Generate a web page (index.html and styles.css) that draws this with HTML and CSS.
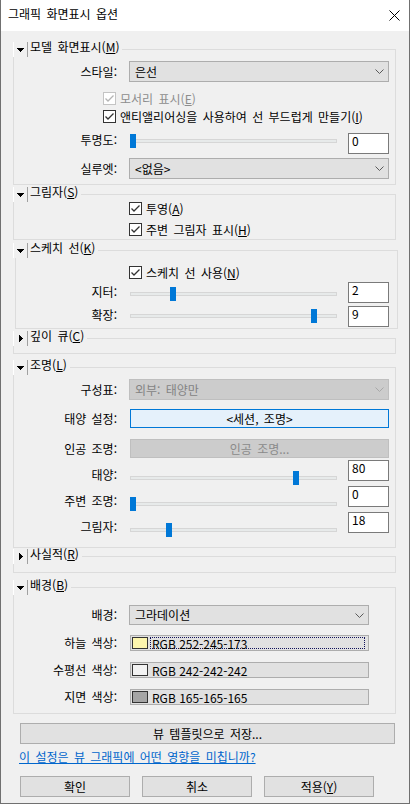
FILE: index.html
```html
<!DOCTYPE html>
<html lang="ko">
<head>
<meta charset="utf-8">
<title>그래픽 화면표시 옵션</title>
<link rel="stylesheet" href="styles.css">
</head>
<body>
<div class="window">
  <div class="titlebar">
    <span class="title">그래픽 화면표시 옵션</span>
    <svg class="close" width="11" height="11" viewBox="0 0 11 11"><path d="M0.5 0.5L10.5 10.5M10.5 0.5L0.5 10.5" stroke="#000" stroke-width="1" fill="none"/></svg>
  </div>
  <div class="content">
    <fieldset class="group g1">
      <legend><span class="toggle"><svg class="tri-down" width="7" height="4" viewBox="0 0 7 4"><path d="M0 0H7V1H6V2H5V3H4V4H3V3H2V2H1V1H0Z" fill="#000"/></svg></span><span class="gtitle">모델 화면표시(<u>M</u>)</span></legend>
      <div class="gbody">
        <div class="row m4">
          <span class="label">스타일:</span>
          <div class="combo"><span>은선</span><svg class="chev" width="9" height="5" viewBox="0 0 9 5"><path d="M0.5 0.5L4.5 4.5L8.5 0.5" fill="none" stroke="#5a5a5a"/></svg></div>
        </div>
        <div class="check-row in1 m10">
          <span class="cbox disabled"><svg width="11" height="11" viewBox="0 0 11 11"><path d="M1.5 5.5L4 8L9.5 2.5" fill="none" stroke="#b4b4b4" stroke-width="1.3"/></svg></span>
          <span class="ctext disabled">모서리 표시(<u>E</u>)</span>
        </div>
        <div class="check-row in1 m5">
          <span class="cbox"><svg width="11" height="11" viewBox="0 0 11 11"><path d="M1.5 5.5L4 8L9.5 2.5" fill="none" stroke="#333" stroke-width="1.3"/></svg></span>
          <span class="ctext">앤티앨리어싱을 사용하여 선 부드럽게 만들기(<u>I</u>)</span>
        </div>
        <div class="srow o1 m10">
          <span class="label">투명도:</span>
          <div class="slider"><div class="track"></div><div class="thumb" style="left:0px"></div></div>
          <div class="num">0</div>
        </div>
        <div class="row m4">
          <span class="label">실루엣:</span>
          <div class="combo"><span>&lt;없음&gt;</span><svg class="chev" width="9" height="5" viewBox="0 0 9 5"><path d="M0.5 0.5L4.5 4.5L8.5 0.5" fill="none" stroke="#5a5a5a"/></svg></div>
        </div>
      </div>
    </fieldset>

    <fieldset class="group g2">
      <legend><span class="toggle"><svg class="tri-down" width="7" height="4" viewBox="0 0 7 4"><path d="M0 0H7V1H6V2H5V3H4V4H3V3H2V2H1V1H0Z" fill="#000"/></svg></span><span class="gtitle">그림자(<u>S</u>)</span></legend>
      <div class="gbody">
        <div class="check-row in2">
          <span class="cbox"><svg width="11" height="11" viewBox="0 0 11 11"><path d="M1.5 5.5L4 8L9.5 2.5" fill="none" stroke="#333" stroke-width="1.3"/></svg></span>
          <span class="ctext">투영(<u>A</u>)</span>
        </div>
        <div class="check-row in2 m8">
          <span class="cbox"><svg width="11" height="11" viewBox="0 0 11 11"><path d="M1.5 5.5L4 8L9.5 2.5" fill="none" stroke="#333" stroke-width="1.3"/></svg></span>
          <span class="ctext">주변 그림자 표시(<u>H</u>)</span>
        </div>
      </div>
    </fieldset>

    <fieldset class="group g3">
      <legend><span class="toggle"><svg class="tri-down" width="7" height="4" viewBox="0 0 7 4"><path d="M0 0H7V1H6V2H5V3H4V4H3V3H2V2H1V1H0Z" fill="#000"/></svg></span><span class="gtitle">스케치 선(<u>K</u>)</span></legend>
      <div class="gbody">
        <div class="check-row in2 m8">
          <span class="cbox"><svg width="11" height="11" viewBox="0 0 11 11"><path d="M1.5 5.5L4 8L9.5 2.5" fill="none" stroke="#333" stroke-width="1.3"/></svg></span>
          <span class="ctext">스케치 선 사용(<u>N</u>)</span>
        </div>
        <div class="srow o2 m3">
          <span class="label">지터:</span>
          <div class="slider"><div class="track"></div><div class="thumb" style="left:40px"></div></div>
          <div class="num">2</div>
        </div>
        <div class="srow o3 m3">
          <span class="label">확장:</span>
          <div class="slider"><div class="track"></div><div class="thumb" style="left:181px"></div></div>
          <div class="num">9</div>
        </div>
      </div>
    </fieldset>

    <fieldset class="group g4">
      <legend><span class="toggle"><svg class="tri-right" width="4" height="7" viewBox="0 0 4 7"><path d="M0 0H1V1H2V2H3V3H4V4H3V5H2V6H1V7H0Z" fill="#000"/></svg></span><span class="gtitle">깊이 큐(<u>C</u>)</span></legend>
      <div class="gbody empty"></div>
    </fieldset>

    <fieldset class="group g5">
      <legend><span class="toggle"><svg class="tri-down" width="7" height="4" viewBox="0 0 7 4"><path d="M0 0H7V1H6V2H5V3H4V4H3V3H2V2H1V1H0Z" fill="#000"/></svg></span><span class="gtitle">조명(<u>L</u>)</span></legend>
      <div class="gbody">
        <div class="row m4">
          <span class="label">구성표:</span>
          <div class="combo disabled"><span>외부: 태양만</span><svg class="chev" width="9" height="5" viewBox="0 0 9 5"><path d="M0.5 0.5L4.5 4.5L8.5 0.5" fill="none" stroke="#a8a8a8"/></svg></div>
        </div>
        <div class="row m9">
          <span class="label">태양 설정:</span>
          <div class="btn sun">&lt;세션, 조명&gt;</div>
        </div>
        <div class="row m11">
          <span class="label">인공 조명:</span>
          <div class="btn off">인공 조명...</div>
        </div>
        <div class="srow o4 m2">
          <span class="label">태양:</span>
          <div class="slider"><div class="track"></div><div class="thumb" style="left:163px"></div></div>
          <div class="num">80</div>
        </div>
        <div class="srow o4">
          <span class="label">주변 조명:</span>
          <div class="slider"><div class="track"></div><div class="thumb" style="left:0px"></div></div>
          <div class="num">0</div>
        </div>
        <div class="srow o4">
          <span class="label">그림자:</span>
          <div class="slider"><div class="track"></div><div class="thumb" style="left:36px"></div></div>
          <div class="num">18</div>
        </div>
      </div>
    </fieldset>

    <fieldset class="group g6">
      <legend><span class="toggle"><svg class="tri-right" width="4" height="7" viewBox="0 0 4 7"><path d="M0 0H1V1H2V2H3V3H4V4H3V5H2V6H1V7H0Z" fill="#000"/></svg></span><span class="gtitle">사실적(<u>R</u>)</span></legend>
      <div class="gbody empty"></div>
    </fieldset>

    <fieldset class="group g7">
      <legend><span class="toggle"><svg class="tri-down" width="7" height="4" viewBox="0 0 7 4"><path d="M0 0H7V1H6V2H5V3H4V4H3V3H2V2H1V1H0Z" fill="#000"/></svg></span><span class="gtitle">배경(<u>B</u>)</span></legend>
      <div class="gbody">
        <div class="row m10">
          <span class="label">배경:</span>
          <div class="combo short"><span>그라데이션</span><svg class="chev" width="9" height="5" viewBox="0 0 9 5"><path d="M0.5 0.5L4.5 4.5L8.5 0.5" fill="none" stroke="#5a5a5a"/></svg></div>
        </div>
        <div class="row m10">
          <span class="label">하늘 색상:</span>
          <div class="colorbtn"><span class="swatch sky"></span><span class="ctxt focus">RGB 252-245-173</span></div>
        </div>
        <div class="row m11">
          <span class="label">수평선 색상:</span>
          <div class="colorbtn"><span class="swatch horizon"></span><span class="ctxt">RGB 242-242-242</span></div>
        </div>
        <div class="row m11">
          <span class="label">지면 색상:</span>
          <div class="colorbtn"><span class="swatch ground"></span><span class="ctxt">RGB 165-165-165</span></div>
        </div>
      </div>
    </fieldset>

    <div class="btn save">뷰 템플릿으로 저장...</div>
    <a class="link" href="#">이 설정은 뷰 그래픽에 어떤 영향을 미칩니까?</a>
    <div class="actions">
      <div class="btn act">확인</div>
      <div class="btn act">취소</div>
      <div class="btn act">적용(<u>Y</u>)</div>
    </div>
  </div>
</div>
</body>
</html>
```

FILE: styles.css
```css
* { box-sizing: border-box; }
html, body { margin: 0; padding: 0; }
body {
  font-family: "Noto Sans CJK KR", "Noto Sans", sans-serif;
  font-size: 12px;
  color: #000;
  background: #f0f0f0;
  word-spacing: 2px;
}
u { text-decoration-thickness: 1px; text-underline-offset: 1px; }

.window {
  width: 410px;
  height: 804px;
  border: 1px solid #707070;
  border-top: none;
  background: #f0f0f0;
  display: flex;
  flex-direction: column;
}
.titlebar {
  height: 31px;
  flex: none;
  background: #fff;
  display: flex;
  align-items: flex-start;
  justify-content: space-between;
  padding: 6px 9px 0 7px;
}
.title { line-height: 15px; }
.close { margin-top: 4px; }

.content {
  padding: 0 13px 0 12px;
  display: flex;
  flex-direction: column;
}

.group {
  border: 1px solid #dcdcdc;
  margin: 0;
  padding: 0;
  min-width: 0;
}
.group legend {
  padding: 0;
  margin-left: -1px;
  height: 15px;
  display: flex;
  align-items: flex-start;
}
.toggle {
  width: 15px;
  height: 15px;
  border-left: 1px solid #fff;
  border-right: 1px solid #a0a0a0;
  display: flex;
  align-items: center;
  justify-content: center;
}
.tri-down { margin-top: 1px; }
.gtitle {
  line-height: 10px;
  padding: 0 3px 0 2px;
  white-space: nowrap;
}
.gbody { display: flex; flex-direction: column; }

.g1 { margin-top: 11px; }
.g1 .gbody { padding-bottom: 5px; }
.g2 { margin-top: 2px; }
.g2 .gbody { padding-bottom: 3px; }
.g3 { margin-top: 3px; margin-left: 2px; margin-right: -2px; }
.g3 legend { margin-left: -3px; }
.g3 .label { width: 101px; }
.g3 .check-row.in2 { margin-left: 113px; }
.g3 .gbody { padding-bottom: 1px; }
.g4 { margin-top: 2px; }
.g4 .gbody { height: 7px; }
.g5 { margin-top: 6px; }
.g5 .gbody { padding-bottom: 9px; }
.g6 { margin-top: 1px; }
.g6 .gbody { height: 8px; }
.g7 { margin-top: 7px; }
.g7 .gbody { padding-bottom: 8px; }

.m2 { margin-top: 2px; }
.m3 { margin-top: 3px; }
.m4 { margin-top: 4px; }
.m5 { margin-top: 5px; }
.m8 { margin-top: 8px; }
.m9 { margin-top: 9px; }
.m10 { margin-top: 10px; }
.m11 { margin-top: 11px; }

.row { display: flex; align-items: center; flex: none; }
.label {
  flex: none;
  width: 103px;
  margin-right: 12px;
  text-align: right;
  line-height: 14px;
  white-space: nowrap;
}

.combo {
  width: 260px;
  height: 21px;
  border: 1px solid #adadad;
  background: #e1e1e1;
  display: flex;
  align-items: center;
  justify-content: space-between;
  padding: 0 4px 0 5px;
  line-height: 14px;
}
.combo.short { width: 240px; height: 20px; }
.combo.disabled { background: #cccccc; border-color: #bfbfbf; color: #838383; }

.check-row { display: flex; align-items: center; height: 13px; flex: none; }
.check-row.in1 { margin-left: 89px; }
.check-row.in2 { margin-left: 115px; }
.cbox {
  flex: none;
  width: 13px;
  height: 13px;
  border: 1px solid #333;
  background: #fff;
  margin-right: 4px;
  display: flex;
}
.cbox.disabled { border-color: #c4c4c4; }
.ctext { line-height: 13px; white-space: nowrap; }
.ctext.disabled { color: #8d8d8d; }

.srow { display: flex; align-items: flex-start; height: 21px; flex: none; }
.srow.o4 { height: 26px; }
.slider {
  position: relative;
  flex: none;
  width: 207px;
  height: 14px;
  margin-left: 1px;
}
.track {
  height: 4px;
  margin-top: 5px;
  border: 1px solid #d6d6d6;
  background: #e7eaea;
}
.thumb {
  position: absolute;
  top: 0;
  width: 6px;
  height: 14px;
  background: #0078d7;
}
.num {
  flex: none;
  width: 41px;
  height: 21px;
  margin-left: 11px;
  border: 1px solid #7a7a7a;
  background: #fff;
  padding: 0 3px;
  line-height: 13px;
}
.o1 .label { margin-top: 0; }
.o1 .slider { margin-top: 1px; }
.o2 .label { margin-top: 3px; }
.o2 .slider { margin-top: 5px; }
.o3 .label { margin-top: 2px; }
.o3 .slider { margin-top: 3px; }
.o4 .label { margin-top: 8px; }
.o4 .slider { margin-top: 11px; }

.btn {
  border: 1px solid #adadad;
  background: #e1e1e1;
  display: flex;
  align-items: center;
  justify-content: center;
  line-height: 14px;
  white-space: nowrap;
}
.btn.sun {
  width: 259px;
  height: 19px;
  margin-left: 1px;
  border-color: #0078d7;
  background: #e5f1fb;
}
.btn.off {
  width: 259px;
  height: 19px;
  margin-left: 1px;
  border-color: #bfbfbf;
  background: #cccccc;
  color: #8a8a8a;
}

.colorbtn {
  width: 239px;
  height: 16px;
  margin-left: 1px;
  border: 1px solid #adadad;
  background: #e1e1e1;
  display: flex;
  align-items: center;
  padding: 0 3px 0 1px;
}
.swatch {
  flex: none;
  width: 16px;
  height: 12px;
  border: 1px solid #333;
}
.swatch.sky { background: rgb(252, 245, 173); }
.swatch.horizon { background: rgb(242, 242, 242); }
.swatch.ground { background: rgb(165, 165, 165); }
.ctxt {
  flex: 1;
  height: 12px;
  margin-left: 2px;
  padding-left: 1px;
  line-height: 12px;
  border: 1px dotted transparent;
  white-space: nowrap;
  word-spacing: 0;
}
.ctxt.focus { border-color: #10105a; }

.save {
  width: 375px;
  height: 21px;
  margin: 9px 0 0 7px;
  flex: none;
}
.link {
  display: block;
  margin: 5px 0 0 6px;
  line-height: 16px;
  color: #0066cc;
  text-decoration: underline;
  align-self: flex-start;
}
.actions {
  display: flex;
  gap: 12px;
  margin: 11px 0 0 7px;
}
.btn.act { width: 110px; height: 21px; }
```
